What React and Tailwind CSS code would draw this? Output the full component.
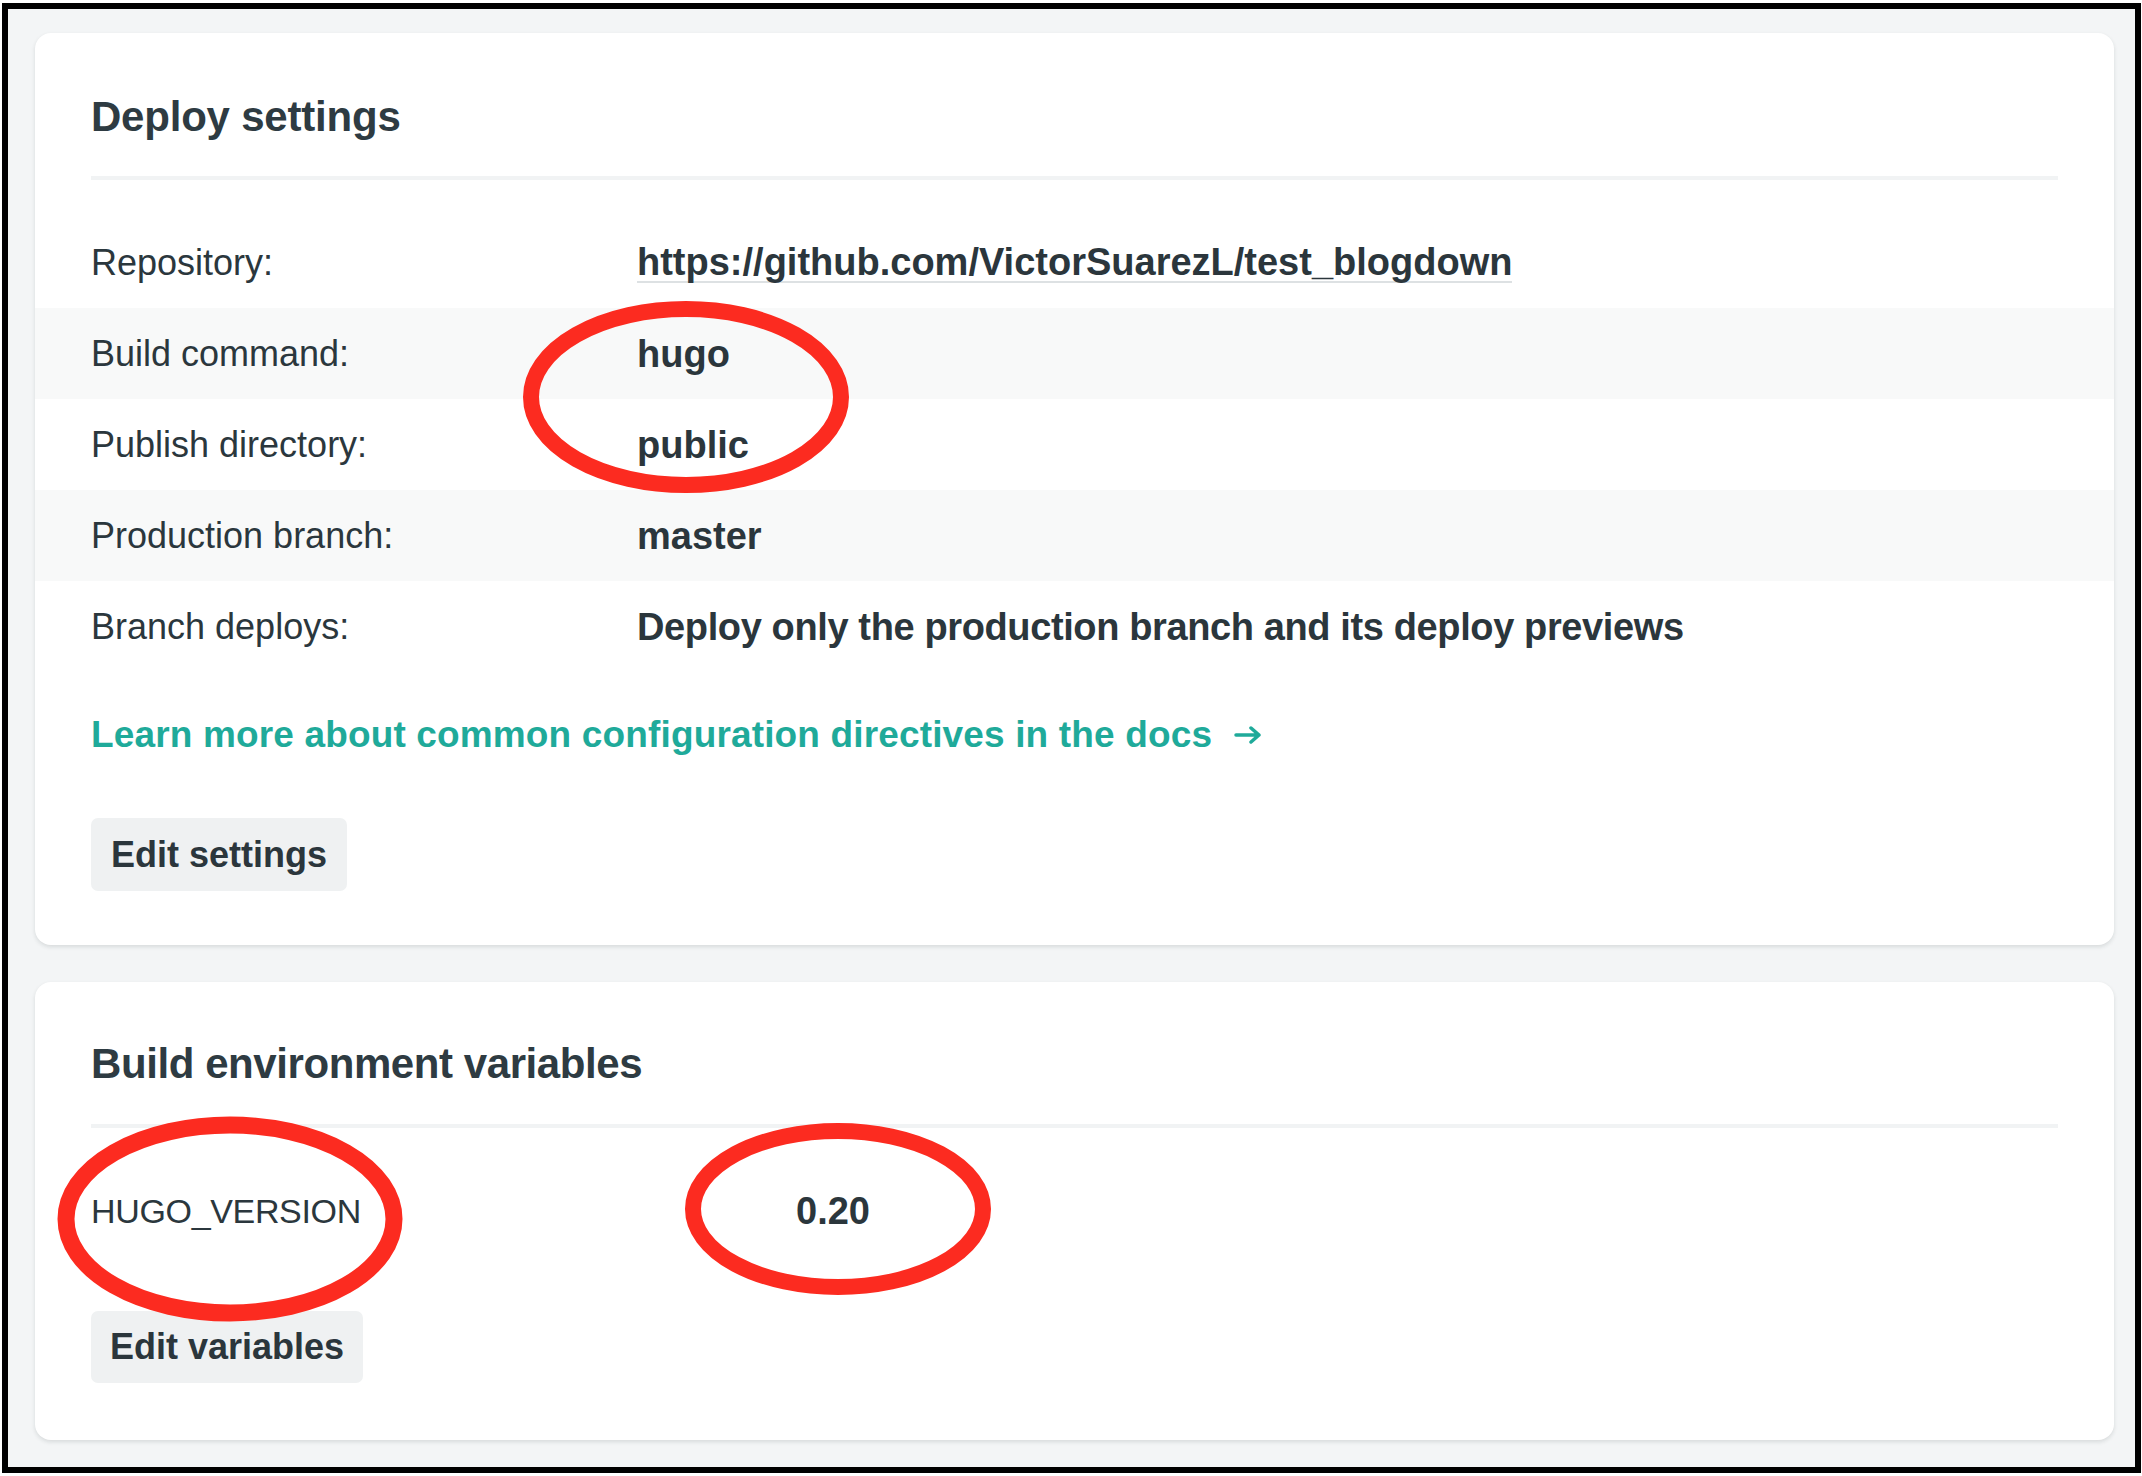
const rows = [
  { label: "Repository:", value: "https://github.com/VictorSuarezL/test_blogdown", link: true },
  { label: "Build command:", value: "hugo" },
  { label: "Publish directory:", value: "public" },
  { label: "Production branch:", value: "master" },
  { label: "Branch deploys:", value: "Deploy only the production branch and its deploy previews", tight: true },
];

// red marker rings drawn over the screenshot
const Marks = () => (
  <svg
    className="absolute inset-0 pointer-events-none"
    width="2142"
    height="1476"
    viewBox="0 0 2142 1476"
    fill="none"
  >
    <ellipse cx="686" cy="397" rx="155" ry="88" stroke="#fc2b20" strokeWidth="16" />
    <ellipse cx="230" cy="1219" rx="164" ry="94" stroke="#fc2b20" strokeWidth="17" />
    <ellipse cx="838" cy="1209" rx="145" ry="78" stroke="#fc2b20" strokeWidth="16" />
  </svg>
);

const Arrow = () => (
  <svg width="28" height="18" viewBox="0 0 28 18" fill="none" className="ml-[22px]">
    <path d="M2 9h23M17 2l8 7-8 7" stroke="#1faa9a" strokeWidth="3.5" strokeLinecap="round" strokeLinejoin="round" />
  </svg>
);

const App = () => {
  return (
    <div className="relative w-[2142px] h-[1476px] bg-white pt-[3px] pl-[2px] pr-[1px] pb-[3px] font-['Liberation_Sans',Arial,sans-serif] text-[#2b373d]">
      <div className="h-full border-[6px] border-black bg-[#f3f5f6] pt-[24px] pl-[27px] pr-[21px] flex flex-col gap-[37px]">
        {/* Deploy settings */}
        <div className="bg-white rounded-[16px] shadow-[0_2px_4px_rgba(14,30,37,0.12)] h-[912px] pt-[59px]">
          <div className="mx-[56px] border-b-4 border-[#f1f3f4] pb-[34px]">
            <h2 className="text-[42px] leading-[50px] font-bold text-[#2e3b42] tracking-[-0.005em]">
              Deploy settings
            </h2>
          </div>
          <div className="mt-[37px]">
            {rows.map((row, i) => (
              <div
                key={row.label}
                className={
                  "h-[91px] flex items-center px-[56px] " +
                  (i % 2 === 1 ? "bg-[#f8f9f9]" : "bg-white")
                }
              >
                <div className="w-[546px] shrink-0 text-[36px] leading-[44px]">{row.label}</div>
                {row.link ? (
                  <span className="inline-block text-[38px] leading-[38px] font-bold text-[#2b363c] border-b-2 border-[#dde1e3]">
                    {row.value}
                  </span>
                ) : (
                  <div
                    className={
                      "text-[38px] leading-[44px] font-bold text-[#2b363c] " +
                      (row.tight ? "tracking-[-0.01em]" : "")
                    }
                  >
                    {row.value}
                  </div>
                )}
              </div>
            ))}
          </div>
          <div className="mx-[56px] mt-[41px] h-[44px] flex items-center text-[37px] font-bold text-[#1faa9a] tracking-[0.004em]">
            <span>Learn more about common configuration directives in the docs</span>
            <Arrow />
          </div>
          <div className="mx-[56px] mt-[61px]">
            <button className="h-[73px] px-[20px] rounded-[7px] bg-[#eff1f2] text-[36px] font-bold text-[#2b363c]">
              Edit settings
            </button>
          </div>
        </div>

        {/* Build environment variables */}
        <div className="bg-white rounded-[16px] shadow-[0_2px_4px_rgba(14,30,37,0.12)] h-[458px] pt-[57px]">
          <div className="mx-[56px] border-b-4 border-[#f1f3f4] pb-[35px]">
            <h2 className="text-[42px] leading-[50px] font-bold text-[#2e3b42] tracking-[-0.01em]">
              Build environment variables
            </h2>
          </div>
          <div className="mt-[37px] h-[91px] flex items-center px-[56px]">
            <div className="w-[705px] shrink-0 text-[34px] leading-[44px] tracking-[-0.01em]">HUGO_VERSION</div>
            <div className="text-[38px] leading-[44px] font-bold text-[#2b363c]">0.20</div>
          </div>
          <div className="mx-[56px] mt-[55px]">
            <button className="h-[72px] px-[19px] rounded-[7px] bg-[#eff1f2] text-[36px] font-bold text-[#2b363c]">
              Edit variables
            </button>
          </div>
        </div>
      </div>
      <Marks />
    </div>
  );
};

export default App;
